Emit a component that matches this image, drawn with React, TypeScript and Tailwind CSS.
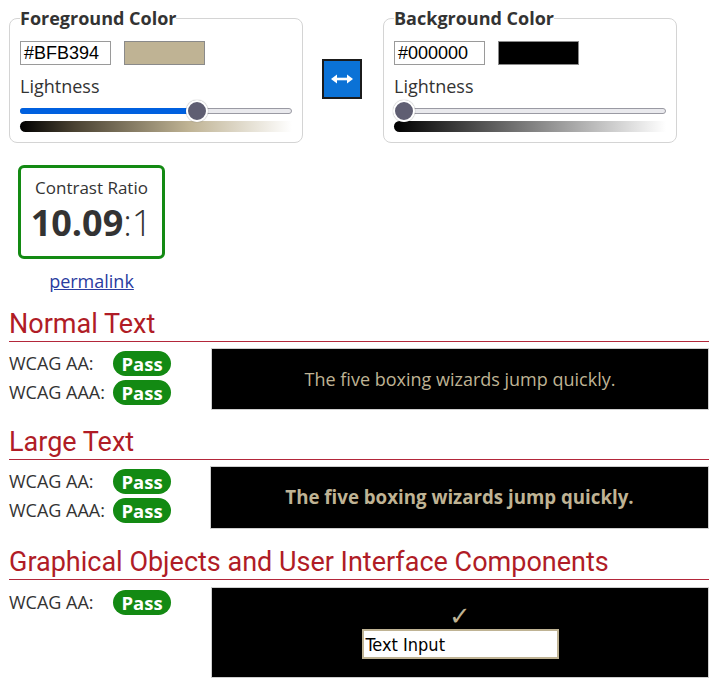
import React from "react";

const OPEN = { fontFamily: '"Open Sans", "Liberation Sans", sans-serif' };

function Slider({ pct, fill, gradient }: { pct: number; fill: boolean; gradient: string }) {
  return (
    <div className="mt-[5px]">
      <div className="relative h-[16px]">
        <div className="absolute left-0 right-0 top-[5px] h-[6px] rounded-full border border-[#9a9aa3] bg-[#e9e9ed]" />
        {fill && (
          <div
            className="absolute left-0 top-[5px] h-[6px] rounded-full bg-[#0060df]"
            style={{ width: `${pct}%` }}
          />
        )}
        <div
          className="absolute top-[-3px] h-[22px] w-[22px] -translate-x-1/2 rounded-full border-2 border-white bg-[#5f5e72] shadow-[0_0_1px_rgba(0,0,0,0.5)]"
          style={{ left: `calc(${pct}% + ${pct < 5 ? 10 : 0}px)` }}
        />
      </div>
      <div className={`mt-[2px] h-[11px] rounded-l-full ${gradient}`} />
    </div>
  );
}

function ColorBox({
  title,
  hex,
  swatch,
  pct,
  fill,
  gradient,
}: {
  title: string;
  hex: string;
  swatch: string;
  pct: number;
  fill: boolean;
  gradient: string;
}) {
  return (
    <fieldset className="w-[294px] rounded-[8px] border border-[#d4d4d4] px-[10px] pb-[10px]">
      <legend className="text-[18px] font-bold leading-[23px] text-[#333]" style={OPEN}>
        {title}
      </legend>
      <div className="mt-[11px] flex items-center">
        <div
          className="flex h-[24px] w-[91px] items-center border border-[#9a9a9a] px-[3px] text-[18px] text-black"
          style={{ fontFamily: '"Liberation Sans", Arial, sans-serif' }}
        >
          {hex}
        </div>
        <div className={`ml-[13px] h-[24px] w-[81px] border border-[#8a8a8a] ${swatch}`} />
      </div>
      <div className="mt-[9px] text-[18px] leading-[24px] text-[#333]" style={OPEN}>
        Lightness
      </div>
      <Slider pct={pct} fill={fill} gradient={gradient} />
    </fieldset>
  );
}

function Pass() {
  return (
    <span
      className="inline-flex h-[25px] w-[58px] items-center justify-center rounded-full bg-[#138a13] text-[18.5px] font-bold text-white"
      style={OPEN}
    >
      Pass
    </span>
  );
}

function Row({ label }: { label: string }) {
  return (
    <div className="flex h-[29px] items-center">
      <span className="w-[104px] text-[18px] text-[#333]" style={OPEN}>
        {label}
      </span>
      <Pass />
    </div>
  );
}

function Heading({ children }: { children: React.ReactNode }) {
  return (
    <div>
      <h2
        className="pb-[1px] text-[27px] leading-[32px] text-[#b01c26]"
        style={{ fontFamily: 'Roboto, "Liberation Sans", sans-serif' }}
      >
        {children}
      </h2>
      <div className="h-[1px] bg-[#b3273a]" />
    </div>
  );
}

export default function App() {
  return (
    <div className="w-[725px] bg-white pl-[9px] pr-[16px] pt-[7px] pb-[14px]" style={OPEN}>
      <div className="flex items-start">
        <ColorBox
          title="Foreground Color"
          hex="#BFB394"
          swatch="bg-[#bfb394]"
          pct={65}
          fill={true}
          gradient="bg-[linear-gradient(to_right,#000_0%,#4a4232_20%,#bfb394_62%,#ffffff_100%)]"
        />
        <button className="ml-[19px] mt-[52px] flex h-[40px] w-[40px] items-center justify-center border-2 border-[#1b1b1b] bg-[#0b72d6]">
          <svg width="24" height="12" viewBox="0 0 24 12">
            <path d="M5 6 H19" stroke="white" strokeWidth="2.6" />
            <path d="M1 6 L7 1.5 V10.5 Z" fill="white" />
            <path d="M23 6 L17 1.5 V10.5 Z" fill="white" />
          </svg>
        </button>
        <div className="ml-[21px]">
          <ColorBox
            title="Background Color"
            hex="#000000"
            swatch="bg-black"
            pct={0}
            fill={false}
            gradient="bg-[linear-gradient(to_right,#000,#ffffff)]"
          />
        </div>
      </div>

      <div className="ml-[9px] mt-[22px] flex w-[147px] flex-col items-center">
        <div className="flex h-[94px] w-[147px] flex-col items-center rounded-[6px] border-[3px] border-[#138a13] pt-[8px]">
          <div className="text-[17px] leading-[23px] text-[#333]">Contrast Ratio</div>
          <div className="mt-0 text-[36px] leading-[48px] text-[#333]">
            <span className="font-bold">10.09</span>
            <span className="font-light">:1</span>
          </div>
        </div>
        <a href="#" className="mt-[10px] text-[18px] leading-[24px] text-[#2a3c9f] underline">
          permalink
        </a>
      </div>

      <div className="mt-[15px]">
        <Heading>Normal Text</Heading>
        <div className="mt-[6px] flex items-start">
          <div className="w-[202px] pt-[1px]">
            <Row label="WCAG AA:" />
            <Row label="WCAG AAA:" />
          </div>
          <div className="flex h-[62px] flex-1 items-center justify-center border border-[#cfcfcf] bg-black text-[18px] text-[#bfb394]">
            The five boxing wizards jump quickly.
          </div>
        </div>
      </div>

      <div className="mt-[16px]">
        <Heading>Large Text</Heading>
        <div className="mt-[6px] flex items-start">
          <div className="w-[201px] pt-[1px]">
            <Row label="WCAG AA:" />
            <Row label="WCAG AAA:" />
          </div>
          <div className="flex h-[63px] flex-1 items-center justify-center border border-[#cfcfcf] bg-black text-[18.7px] font-bold text-[#bfb394]">
            The five boxing wizards jump quickly.
          </div>
        </div>
      </div>

      <div className="mt-[17px]">
        <Heading>Graphical Objects and User Interface Components</Heading>
        <div className="mt-[7px] flex items-start">
          <div className="w-[202px] pt-[1px]">
            <Row label="WCAG AA:" />
          </div>
          <div className="flex h-[91px] flex-1 flex-col items-center border border-[#cfcfcf] bg-black">
            <div
              className="mt-[13px] h-[28px] text-[26px] leading-[30px] text-[#bfb394]"
              style={{ fontFamily: '"DejaVu Sans", sans-serif' }}
            >
              ✓
            </div>
            <div
              className="flex h-[30px] w-[197px] items-center border-[2px] border-[#bfb394] bg-white px-[2px] text-[18px] text-black"
              style={{ fontFamily: '"DejaVu Sans Condensed", "DejaVu Sans", sans-serif' }}
            >
              Text Input
            </div>
          </div>
        </div>
      </div>
    </div>
  );
}
